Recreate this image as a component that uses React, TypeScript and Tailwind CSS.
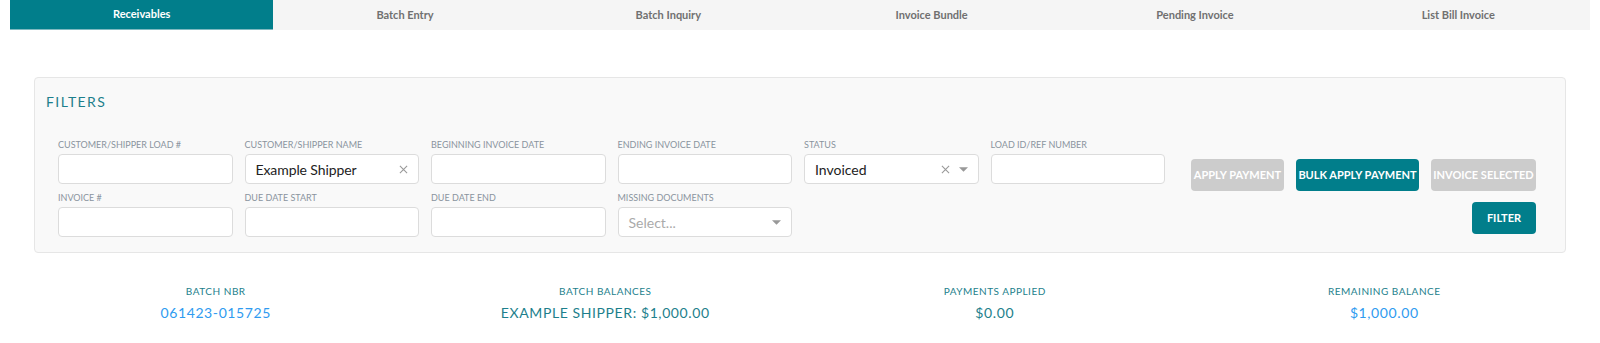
import { useState } from 'react';

const tabs = ['Receivables', 'Batch Entry', 'Batch Inquiry', 'Invoice Bundle', 'Pending Invoice', 'List Bill Invoice'];

const Caret = () => (
  <svg className="w-[9px] h-[5px] text-[#999]" viewBox="0 0 10 5" fill="currentColor">
    <path d="M0 0h10L5 5z" />
  </svg>
);

const Cross = () => (
  <svg className="w-[9px] h-[9px] text-[#999]" viewBox="0 0 10 10" stroke="currentColor" strokeWidth="1.2" fill="none">
    <path d="M1 1l8 8M9 1l-8 8" />
  </svg>
);

const Field = ({ label, children }: { label: string; children?: React.ReactNode }) => (
  <div className="flex flex-col">
    <label className="text-[9px] leading-[12px] text-[#8a949e] uppercase mb-[3px] whitespace-nowrap">{label}</label>
    <div className="h-[30px] bg-white border border-[#dcdcdc] rounded-[4px] flex items-center px-[10px]">
      {children}
    </div>
  </div>
);

const Stat = ({ label, value, color }: { label: string; value: string; color: string }) => (
  <div className="flex flex-col items-center">
    <span className="text-[10px] leading-[14px] tracking-[0.5px] text-[#1d7f8c] uppercase">{label}</span>
    <span className={`mt-[6px] text-[14px] leading-[18px] tracking-[0.6px] ${color}`}>{value}</span>
  </div>
);

export default function App() {
  const [active] = useState(0);

  return (
    <div className="min-h-screen bg-white font-['Lato',sans-serif] text-[#333]">
      {/* Tabs */}
      <div className="mx-[10px] h-[30px] bg-[#f5f5f5] flex">
        {tabs.map((t, i) => (
          <div
            key={t}
            className={
              i === active
                ? 'flex-1 flex items-center justify-center bg-[#017e8b] text-white text-[11px] font-bold border-b border-[#7fb9c0]'
                : 'flex-1 flex items-center justify-center text-[#707070] text-[11px] font-bold'
            }
          >
            {t}
          </div>
        ))}
      </div>

      {/* Filters panel */}
      <div className="mx-[34px] mt-[47px] bg-[#f9f9f9] border border-[#e6e6e6] rounded-[4px] px-[11px] pt-[15px] pb-[15px]">
        <h2 className="text-[14px] leading-[17px] tracking-[1.4px] text-[#1d7f8c] mb-[29px]">FILTERS</h2>

        <div className="flex pl-[12px] pr-[18px]">
          <div className="flex-1 grid grid-cols-6 gap-x-3 gap-y-2">
            <Field label="Customer/Shipper Load #" />
            <Field label="Customer/Shipper Name">
              <span className="flex-1 text-[14px] tracking-[-0.1px] text-[#222]">Example Shipper</span>
              <Cross />
            </Field>
            <Field label="Beginning Invoice Date" />
            <Field label="Ending Invoice Date" />
            <Field label="Status">
              <span className="flex-1 text-[14px] text-[#222]">Invoiced</span>
              <Cross />
              <span className="ml-[9px]"><Caret /></span>
            </Field>
            <Field label="Load ID/Ref Number" />
            <Field label="Invoice #" />
            <Field label="Due Date Start" />
            <Field label="Due Date End" />
            <Field label="Missing Documents">
              <span className="flex-1 text-[14px] text-[#aaa]">Select...</span>
              <Caret />
            </Field>
          </div>

          <div className="ml-[26px] pt-[20px] flex flex-col items-end gap-[11px]">
            <div className="flex gap-3">
              <button className="h-[32px] w-[93px] rounded-[4px] bg-[#cccccc] text-white text-[11px] font-bold whitespace-nowrap">APPLY PAYMENT</button>
              <button className="h-[32px] w-[123px] rounded-[4px] bg-[#017e8b] text-white text-[11px] font-bold whitespace-nowrap">BULK APPLY PAYMENT</button>
              <button className="h-[32px] w-[105px] rounded-[4px] bg-[#cccccc] text-white text-[11px] font-bold whitespace-nowrap">INVOICE SELECTED</button>
            </div>
            <button className="h-[32px] w-[64px] rounded-[4px] bg-[#017e8b] text-white text-[11px] font-bold">FILTER</button>
          </div>
        </div>
      </div>

      {/* Batch summary */}
      <div className="mx-[21px] mt-[31px] grid grid-cols-4">
        <Stat label="Batch Nbr" value="061423-015725" color="text-[#2f9bf0]" />
        <Stat label="Batch Balances" value="EXAMPLE SHIPPER: $1,000.00" color="text-[#1d7f8c]" />
        <Stat label="Payments Applied" value="$0.00" color="text-[#1d7f8c]" />
        <Stat label="Remaining Balance" value="$1,000.00" color="text-[#2f9bf0]" />
      </div>
    </div>
  );
}
